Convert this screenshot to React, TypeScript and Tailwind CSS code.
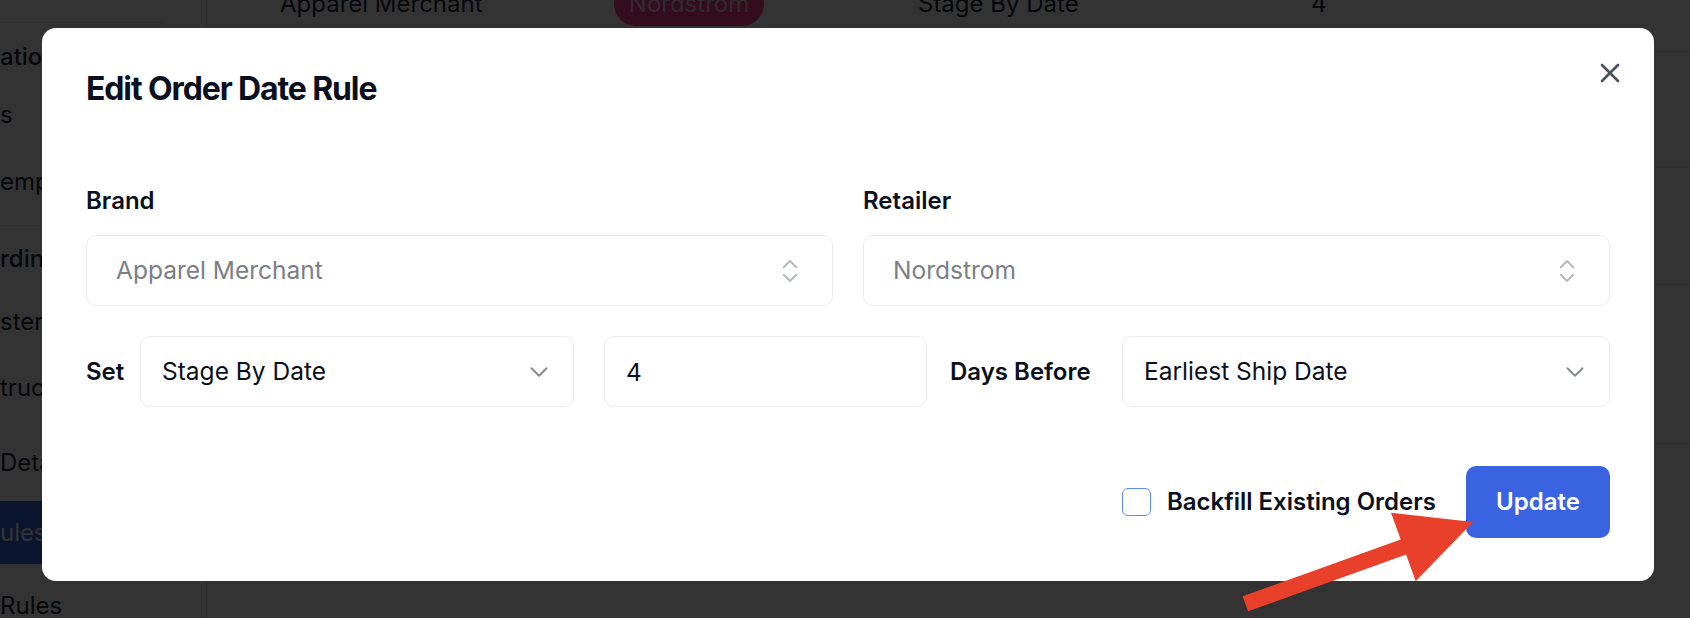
import { X, ChevronDown, ChevronsUpDown } from "lucide-react";

const SIDEBAR = [
  { text: "ations", h: "h-[68px]", bold: true },
  { text: "s", h: "h-[48px]" },
  { text: "emplat", h: "h-[87px]", sep: true },
  { text: "rding", h: "h-[66px]", bold: true },
  { text: "sters", h: "h-[60px]" },
  { text: "tructi", h: "h-[72px]" },
  { text: "Detai", h: "h-[77px]" },
  { text: "ules", h: "h-[63px]", active: true },
  { text: "Rules", h: "h-[84px]" },
];

function Sidebar() {
  return (
    <aside className="w-[207px] shrink-0 border-r border-gray-300">
      <div className="h-[23px] mr-[43px] border-b border-gray-200" />
      {SIDEBAR.map((item) => (
        <div
          key={item.text + item.h}
          className={
            "flex items-center whitespace-nowrap text-[24px] text-gray-800 " +
            item.h +
            (item.sep ? " border-b border-gray-200" : "") +
            (item.active ? " bg-[#3c6cf0] text-white" : "") +
            (item.bold ? " font-medium" : "")
          }
        >
          {item.text}
        </div>
      ))}
    </aside>
  );
}

function TableBehind() {
  return (
    <main className="flex-1">
      <div className="-mt-[44px] h-[96px] flex items-center border-b border-gray-200 text-[24px] text-gray-800 whitespace-nowrap">
        <span className="ml-[73px] w-[334px] shrink-0">Apparel Merchant</span>
        <span className="w-[150px] h-[44px] shrink-0 rounded-full bg-[#ff3d8f] flex items-center justify-center text-[#ffd0e4]">
          Nordstrom
        </span>
        <span className="ml-[154px] w-[393px] shrink-0">Stage By Date</span>
        <span>4</span>
      </div>
      <div className="h-[116px] border-b border-gray-200" />
      <div className="h-[117px] border-b border-gray-200" />
      <div className="h-[159px] border-b border-gray-200" />
    </main>
  );
}

function SelectBox({
  value,
  muted,
  updown,
  className,
}: {
  value: string;
  muted?: boolean;
  updown?: boolean;
  className?: string;
}) {
  return (
    <div
      className={
        "h-[71px] flex items-center justify-between rounded-[10px] border border-[#e9ebf1] bg-white " +
        (updown ? "pl-[29px] pr-[27px] " : "pl-[21px] pr-[19px] ") +
        (className ?? "")
      }
    >
      <span className={"text-[24.5px] " + (muted ? "text-[#7b7f88]" : "text-[#0b1020]")}>{value}</span>
      {updown ? (
        <ChevronsUpDown size={30} strokeWidth={1.5} className="text-[#b4b7be]" />
      ) : (
        <ChevronDown size={30} strokeWidth={1.5} className="text-[#85888f]" />
      )}
    </div>
  );
}

function EditRuleDialog() {
  return (
    <div className="absolute left-[42px] top-[28px] w-[1612px] rounded-[14px] bg-white px-[44px] pt-[41px] pb-[43px] text-[#0b1020]">
      <button className="absolute right-[28px] top-[29px] text-[#4b5160]">
        <X size={32} strokeWidth={2} />
      </button>

      <h2 className="text-[32px] leading-[40px] font-bold tracking-[-0.035em]">Edit Order Date Rule</h2>

      <div className="mt-[76px] grid grid-cols-2 gap-x-[30px]">
        <div>
          <label className="block text-[24px] leading-8 font-semibold">Brand</label>
          <SelectBox value="Apparel Merchant" muted updown className="mt-[18px]" />
        </div>
        <div>
          <label className="block text-[24px] leading-8 font-semibold">Retailer</label>
          <SelectBox value="Nordstrom" muted updown className="mt-[18px]" />
        </div>
      </div>

      <div className="mt-[30px] flex items-center">
        <span className="w-[54px] shrink-0 text-[24px] font-semibold">Set</span>
        <SelectBox value="Stage By Date" className="w-[434px] shrink-0" />
        <input
          readOnly
          defaultValue="4"
          className="ml-[30px] w-[323px] h-[71px] shrink-0 rounded-[10px] border border-[#e9ebf1] px-[21px] text-[24.5px] text-[#0b1020] outline-none"
        />
        <span className="w-[195px] shrink-0 pl-[23px] text-[24px] font-semibold whitespace-nowrap">Days Before</span>
        <SelectBox value="Earliest Ship Date" className="flex-1 min-w-0" />
      </div>

      <div className="mt-[59px] flex items-center justify-end">
        <label className="flex items-center gap-[16px]">
          <span className="w-[29px] h-[28px] rounded-[6px] border-[1.5px] border-[#5b8bf0] bg-white" />
          <span className="text-[24px] font-semibold">Backfill Existing Orders</span>
        </label>
        <button className="ml-[30px] w-[144px] h-[72px] rounded-[10px] bg-[#3a63e1] text-white text-[24px] font-semibold">
          Update
        </button>
      </div>
    </div>
  );
}

export default function App() {
  return (
    <div className="relative h-[618px] w-[1690px] overflow-hidden bg-white font-['Inter',sans-serif]">
      <div className="flex h-full">
        <Sidebar />
        <TableBehind />
      </div>
      <div className="absolute inset-0 bg-black/80" />
      <EditRuleDialog />
      <svg className="pointer-events-none absolute inset-0" width="1690" height="618" viewBox="0 0 1690 618">
        <polygon
          points="1473,522 1391,512.7 1400.7,539.5 1242.6,596.3 1248,611.3 1406.1,554.5 1415.7,581.3"
          fill="#e8402a"
        />
      </svg>
    </div>
  );
}
